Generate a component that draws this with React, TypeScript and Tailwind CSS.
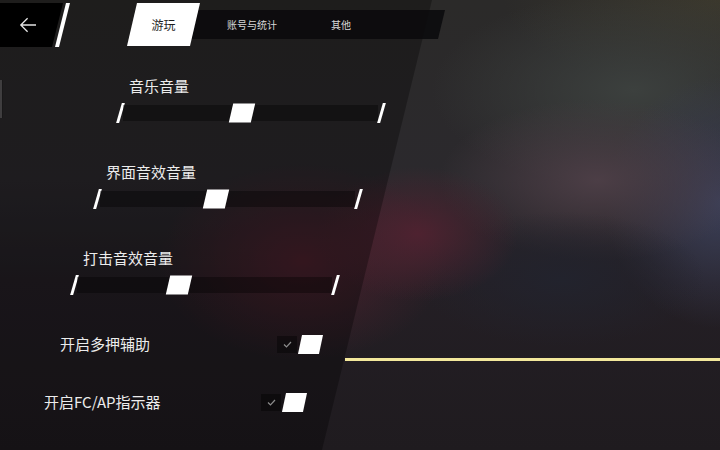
type SliderProps = {
  label: string
  thumb: number
  className: string
}

type ToggleProps = {
  label: string
  className: string
}

// thin "/" mark that caps each end of a slider
function Slash() {
  return (
    <div className="flex h-5 w-[6px] justify-center">
      <div className="h-5 w-[2.5px] -skew-x-[16deg] bg-white" />
    </div>
  )
}

function VolumeSlider({ label, thumb, className }: SliderProps) {
  return (
    <div className={className}>
      <div className="pl-3 text-[15px] leading-5 text-[#ececec]">{label}</div>
      <div className="mt-[7px] flex h-5 items-center">
        <Slash />
        <div className="relative h-4 w-[255px] bg-black/35">
          <div
            className="absolute top-1/2 h-[19px] w-[22px] -translate-y-1/2 -skew-x-[13deg] bg-white"
            style={{ left: thumb }}
          />
        </div>
        <Slash />
      </div>
    </div>
  )
}

function Toggle({ label, className }: ToggleProps) {
  return (
    <div className={className}>
      <div className="flex h-5 items-center">
        <div className="w-[217px] text-[15px] leading-5 text-[#ececec]">{label}</div>
        <div className="flex h-[17px] w-5 items-center justify-center bg-black/40">
          <svg width="9" height="7" viewBox="0 0 9 7" fill="none">
            <path d="M1 3.5L3.5 6L8 1" stroke="#8c8c8c" strokeWidth="1.2" />
          </svg>
        </div>
        <div className="ml-[3px] h-[19px] w-[21px] -skew-x-[12deg] bg-white" />
      </div>
    </div>
  )
}

export default function App() {
  return (
    <div className="relative h-[450px] w-[720px] overflow-hidden bg-[#221e21] font-['Noto_Sans_CJK_SC','Noto_Sans',sans-serif]">
      {/* blurred cover art behind the menu */}
      <div className="absolute inset-0 bg-[radial-gradient(ellipse_14%_15%_at_58%_52%,#4e2230_0%,transparent_100%),radial-gradient(ellipse_20%_15%_at_78%_62%,#22232d_0%,transparent_100%),radial-gradient(ellipse_22%_18%_at_83%_40%,#4c3e46_0%,transparent_100%),radial-gradient(ellipse_16%_28%_at_100%_45%,#3b3f58_0%,transparent_100%),radial-gradient(ellipse_28%_22%_at_88%_20%,#3c403e_0%,transparent_100%),radial-gradient(ellipse_30%_20%_at_100%_0%,#3b382d_0%,transparent_100%),radial-gradient(ellipse_20%_22%_at_42%_58%,#4a202c_0%,transparent_100%),linear-gradient(180deg,#2b2a29_0%,#2b292d_40%,#241f25_62%,#1f1b1f_100%)]" />

      {/* dark slanted settings panel */}
      <div className="absolute inset-0 bg-black/30 [clip-path:polygon(0_0,432px_0,322px_100%,0_100%)]" />

      {/* edge handle on the far left */}
      <div className="absolute left-0 top-[80px] h-[38px] w-[3px] border-r border-black/60 bg-white/15" />

      {/* progress line on the preview side */}
      <div className="absolute left-[345px] right-0 top-[358px] h-[3px] bg-[#f3e89c]" />

      <div className="relative flex flex-col">
        {/* header: back button and tabs */}
        <div className="flex pt-[3px]">
          <div className="relative h-[44px] w-[72px]">
            <div className="absolute inset-0 flex items-center bg-black pl-[19px] [clip-path:polygon(0_0,63px_0,52px_100%,0_100%)]">
              <svg width="18" height="16" viewBox="0 0 18 16" fill="none">
                <path d="M17 8H1.8M8.6 1.2L1.8 8L8.6 14.8" stroke="#e4e4e4" strokeWidth="1.3" />
              </svg>
            </div>
            <div className="absolute inset-0 bg-white [clip-path:polygon(66px_0,70px_0,59px_100%,55px_100%)]" />
          </div>

          <div className="relative ml-[55px] h-[43px] w-[318px]">
            <div className="absolute left-[50px] right-0 top-[7px] h-[29px] bg-[#0b0b0d]/90 [clip-path:polygon(0_0,100%_0,calc(100%_-_7px)_100%,0_100%)]" />
            <div className="relative flex h-full items-center">
              <div className="flex h-full w-[73px] items-center justify-center bg-white text-[12px] text-[#1e1e1e] [clip-path:polygon(10px_0,100%_0,calc(100%_-_10px)_100%,0_100%)]">
                游玩
              </div>
              <div className="w-[104px] text-center text-[10px] text-[#d8d8d8]">账号与统计</div>
              <div className="w-[74px] text-center text-[10px] text-[#d8d8d8]">其他</div>
            </div>
          </div>
        </div>

        <VolumeSlider label="音乐音量" thumb={108} className="ml-[117px] mt-[29px]" />
        <VolumeSlider label="界面音效音量" thumb={105} className="ml-[94px] mt-[39px]" />
        <VolumeSlider label="打击音效音量" thumb={91} className="ml-[71px] mt-[39px]" />

        <Toggle label="开启多押辅助" className="ml-[60px] mt-[39px]" />
        <Toggle label="开启FC/AP指示器" className="ml-[44px] mt-[38px]" />
      </div>
    </div>
  )
}
